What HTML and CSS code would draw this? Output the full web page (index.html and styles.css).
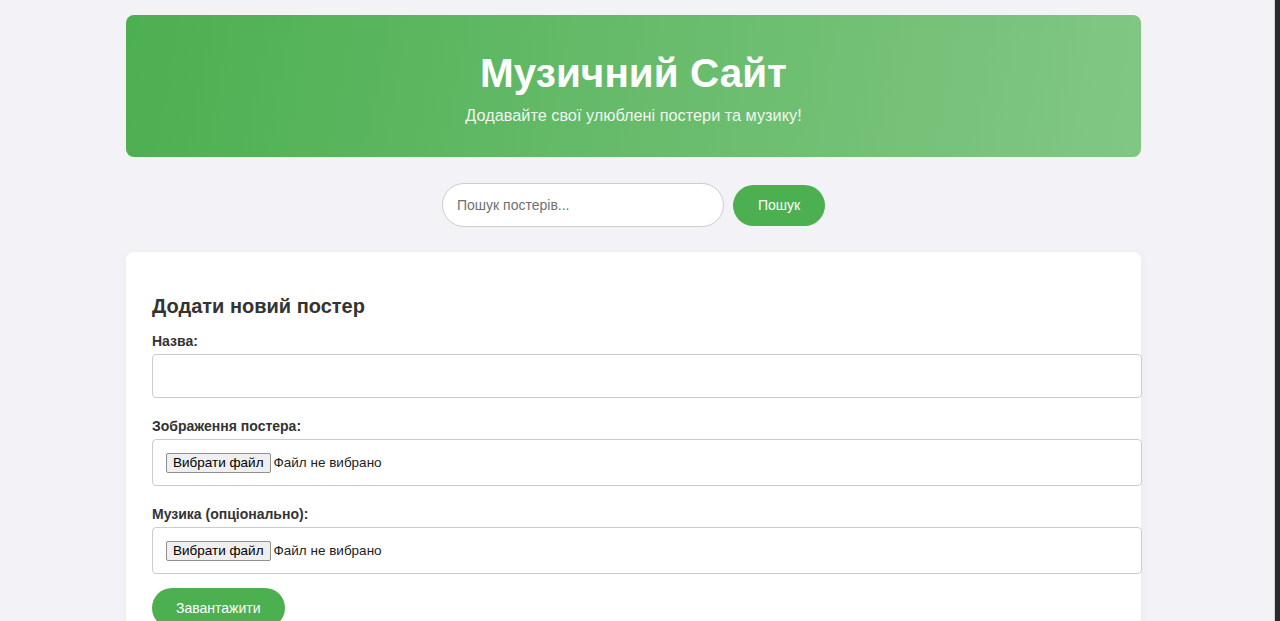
FILE: index.html
```html
<!DOCTYPE html>
<html lang="uk">
<head>
<meta charset="utf-8">
<title>Музичний Сайт</title>
<link rel="stylesheet" href="styles.css">
</head>
<body>
<div class="container">
  <header class="hero">
    <h1 class="hero-title">Музичний Сайт</h1>
    <p class="hero-sub">Додавайте свої улюблені постери та музику!</p>
  </header>

  <form class="search" onsubmit="return false">
    <input class="search-input" type="text" placeholder="Пошук постерів...">
    <button class="btn search-btn" type="submit">Пошук</button>
  </form>

  <section class="card">
    <h2 class="card-title">Додати новий постер</h2>
    <form class="upload" onsubmit="return false">
      <div class="field">
        <label class="field-label" for="title">Назва:</label>
        <input class="field-input text-input" id="title" type="text">
      </div>
      <div class="field">
        <span class="field-label">Зображення постера:</span>
        <label class="field-input file-box">
          <input class="file-native" type="file" accept="image/*">
          <span class="file-btn">Вибрати файл</span>
          <span class="file-name">Файл не вибрано</span>
        </label>
      </div>
      <div class="field field-last">
        <span class="field-label">Музика (опціонально):</span>
        <label class="field-input file-box">
          <input class="file-native" type="file" accept="audio/*">
          <span class="file-btn">Вибрати файл</span>
          <span class="file-name">Файл не вибрано</span>
        </label>
      </div>
      <button class="btn upload-btn" type="submit">Завантажити</button>
    </form>
  </section>
</div>
<div class="scroll-rail" aria-hidden="true"></div>
</body>
</html>
```
FILE: styles.css
```css
html {
  background: #f3f3f7;
}
body {
  margin: 0;
  padding: 0 13px 40px 0;
  background: #f3f3f7;
  font-family: "Liberation Sans", Arial, sans-serif;
  color: #333;
}
.scroll-rail {
  position: fixed;
  top: 0;
  right: 0;
  bottom: 0;
  width: 5px;
  background: #2b2b2b;
  border-left: 1px solid #d6d6da;
}
.container {
  width: 1015px;
  margin: 15px auto 0;
}
.hero {
  background: linear-gradient(100deg, #4caf50 0%, #81c784 100%);
  border-radius: 8px;
  padding: 35px 20px 32px;
  text-align: center;
  color: #fff;
}
.hero-title {
  margin: 0 0 10px;
  font-size: 40.5px;
  line-height: 46px;
  font-weight: 700;
}
.hero-sub {
  margin: 0;
  font-size: 16.3px;
  line-height: 19px;
  color: rgba(255,255,255,0.92);
}
.search {
  display: flex;
  justify-content: center;
  align-items: center;
  gap: 9px;
  margin: 26px 0 25px;
}
.search-input {
  box-sizing: border-box;
  width: 282px;
  height: 44px;
  padding: 0 14px;
  border: 1px solid #ccc;
  border-radius: 25px;
  font-family: inherit;
  font-size: 14px;
  color: #333;
  background: #fff;
  outline: none;
}
.search-input::placeholder {
  color: #707070;
}
.btn {
  border: none;
  background: #4caf50;
  color: #fff;
  font-family: inherit;
  font-size: 14px;
  border-radius: 25px;
  cursor: pointer;
}
.search-btn {
  width: 92px;
  height: 41px;
}
.card {
  background: #fff;
  border-radius: 8px;
  box-shadow: 0 2px 10px rgba(0,0,0,0.05);
  padding: 43px 25px 25px 26px;
}
.card-title {
  margin: 0 0 15px;
  font-size: 20px;
  line-height: 23px;
  font-weight: 700;
  color: #333;
}
.field {
  margin-bottom: 20px;
}
.field-last {
  margin-bottom: 14px;
}
.field-label {
  display: block;
  font-size: 14px;
  line-height: 16px;
  font-weight: 700;
  margin-bottom: 5px;
  color: #333;
}
.field-input {
  display: block;
  width: 100%;
  padding: 12px;
  border: 1px solid #ccc;
  border-radius: 4px;
  font-family: inherit;
  font-size: 14px;
  background: #fff;
  color: #333;
}
.text-input {
  height: 18px;
}
.file-box {
  display: flex;
  align-items: center;
  gap: 3px;
  height: 21px;
  cursor: pointer;
}
.file-native {
  display: none;
}
.file-btn {
  box-sizing: border-box;
  height: 20px;
  display: flex;
  align-items: center;
  margin-left: 1px;
  padding: 0 6px;
  border: 1px solid #8f8f8f;
  border-radius: 2px;
  background: #efefef;
  color: #000;
  font-size: 13.5px;
}
.file-name {
  font-size: 13.5px;
  color: #222;
}
.upload-btn {
  padding: 12px 24px;
  line-height: 16px;
}
```
